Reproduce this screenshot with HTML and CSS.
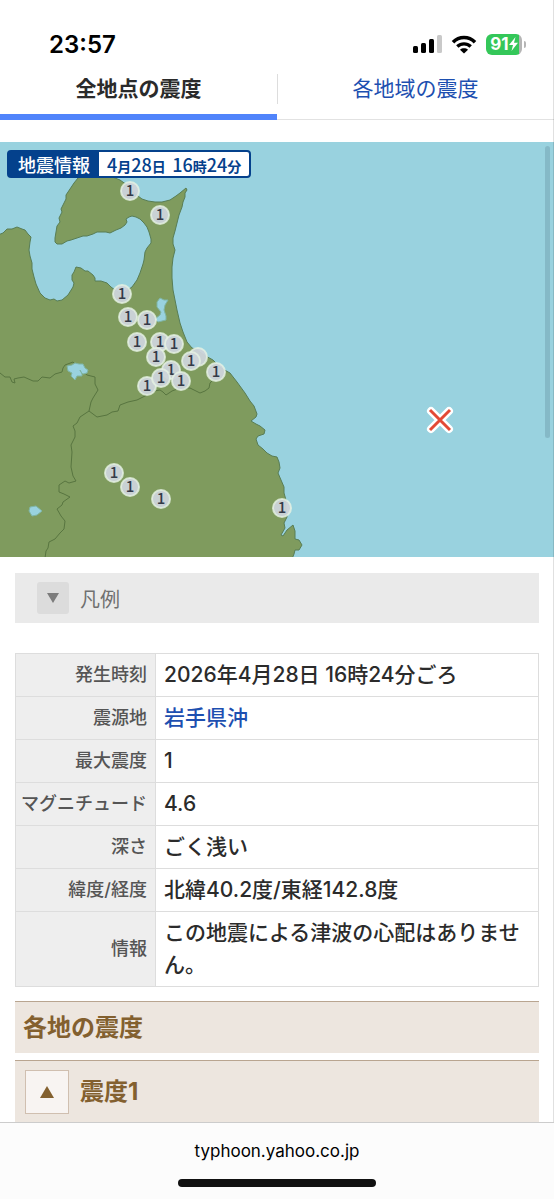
FILE: index.html
```html
<!DOCTYPE html>
<html lang="ja">
<head>
    <meta charset="UTF-8">
    <meta name="viewport" content="width=device-width, initial-scale=1.0">
    <title>地震情報</title>
    <link rel="stylesheet" href="styles.css">
</head>
<body>

<header class="status-bar">
    <time class="clock">23:57</time>
    <div class="status-icons">
        <svg width="29" height="18" viewBox="0 0 29 18" aria-hidden="true">
            <rect x="0" y="11" width="5" height="7" rx="1.5"/>
            <rect x="8" y="8" width="5" height="10" rx="1.5"/>
            <rect x="16" y="4" width="5" height="14" rx="1.5"/>
            <rect x="24" y="0" width="5" height="18" rx="1.5" fill="#c9c9c9"/>
        </svg>
        <svg width="26" height="19" viewBox="0 0 26 19" aria-hidden="true">
            <path d="M2 7.2C8.2 1 17.800 1 24 7.200" fill="none" stroke="#000" stroke-width="3.600"/>
            <path d="M6.300 11.600C10.200 7.900 15.800 7.900 19.700 11.600" fill="none" stroke="#000" stroke-width="3.400"/>
            <path d="M13 18.600L9 14.700C11.200 12.800 14.800 12.800 17 14.700Z"/>
        </svg>
        <div class="battery">
            <span>91</span>
            <svg width="9" height="14" viewBox="0 0 9 14" aria-hidden="true"><path d="M6.500 0L0 8H4L2.500 14L9 5.800H5Z" fill="#fff"/></svg>
        </div>
    </div>
</header>

<main>
    <nav class="tabs">
        <a class="tab active" href="#points">全地点の震度</a>
        <a class="tab" href="#areas">各地域の震度</a>
    </nav>

    <div class="map" id="points">
        <svg class="map-image" viewBox="0 0 554 415" role="img" aria-label="震度分布地図">
            <path class="land" d="M-2 93L3 91L7 87L12 87L17 85L22 87L25 88L28 92L31 95L30 100L29 108L30 114L32 121L32 127L34 135L36 142L40 151L45 156L50 158L54 157L57 159L62 158L68 153L73 145L74 141L72 138L72 133L74 130L76 125L81 126L85 129L88 129L93 133L95 136L95 139L101 139L107 141L111 145L115 148L122 152L132 145L137 138L140 131L143 122L144 118L145 110L147 106L151 101L151 97L149 90L147 85L144 81L140 77L136 75L132 74L129 75L126 77L127 80L125 83L121 86L116 88L110 91L106 90L101 90L97 90L93 92L90 93L87 94L83 94L77 96L71 98L67 99L62 102L57 102L55 100L55 96L56 90L57 84L60 80L59 76L62 70L61 67L63 63L66 57L66 53L68 50L72 44L74 41L78 36L84 32L105 32L120 38L127 43L134 51L142 57L148 59L155 60L162 60L170 58L176 54L180 51L186 46L187 48L185 51L185 55L183 60L182 65L179 73L177 81L175 89L173 96L173 102L175 108L173 116L172 125L172 136L173 148L175 158L177 168L180 181L183 190L187 200L192 206L197 208L204 213L213 218L221 226L230 231L237 240L245 251L250 259L254 264L257 272L256 275L251 279L256 282L260 284L265 288L264 292L258 294L256 297L258 303L263 307L267 311L272 314L277 315L279 320L280 326L278 331L281 338L284 345L284 351L286 358L286 366L287 375L284 381L285 386L281 393L283 394L287 388L293 383L295 389L295 397L299 398L302 403L299 408L295 408L294 412L292 417H-2Z"/>

            <path class="border" d="M0 231L5 235L10 235L12 240L15 241L14 237L18 236L24 235L33 239L38 239L42 235L50 236L55 232L62 230L63 226L65 223L73 220L78 225L87 233L95 235L95 242L98 248L93 256L91 260L89 269L97 275L107 273L112 270L118 269L120 263L128 260L137 258L147 253L154 249L160 248L163 250L166 253L172 249L180 246L190 246L196 249L200 251L205 249L209 246L210 241L214 237"/>
            <path class="border" d="M89 269L80 275L77 281L73 284L75 289L75 295L71 303L72 310L71 325L73 334L76 339L69 341L65 339L59 343L59 350L64 352L70 355L63 360L62 363L57 367L61 374L65 379L64 387L60 391L55 397L49 400L48 406L46 409L45 416"/>

            <path class="lake" d="M160 156L164 158L168 158L165 163L164 168L166 174L166 178L158 180L155 177L160 173L161 170L157 165L157 160Z"/>
            <path class="lake" d="M67 224L72 223L75 221L79 222L83 222L85 226L88 228L87 231L83 232L81 230L80 228L82 232L82 234L77 234L75 238L71 234L72 231L68 229Z"/>
            <path class="lake" d="M30 365L36 364L42 369L37 373L32 374L29 369Z"/>

            <g class="pin"><circle cx="130" cy="49" r="9"/><text x="130" y="54">1</text></g>
            <g class="pin"><circle cx="160" cy="73" r="9"/><text x="160" y="78">1</text></g>
            <g class="pin"><circle cx="122" cy="152" r="9"/><text x="122" y="157">1</text></g>
            <g class="pin"><circle cx="128" cy="175" r="9"/><text x="128" y="180">1</text></g>
            <g class="pin"><circle cx="147" cy="178" r="9"/><text x="147" y="183">1</text></g>
            <g class="pin"><circle cx="137" cy="200" r="9"/><text x="137" y="205">1</text></g>
            <g class="pin"><circle cx="160" cy="200" r="9"/><text x="160" y="205">1</text></g>
            <g class="pin"><circle cx="174" cy="202" r="9"/><text x="174" y="207">1</text></g>
            <g class="pin"><circle cx="156" cy="215" r="9"/><text x="156" y="220">1</text></g>
            <g class="pin"><circle cx="198" cy="215" r="9"/></g>
            <g class="pin"><circle cx="191" cy="219" r="9"/><text x="191" y="224">1</text></g>
            <g class="pin"><circle cx="216" cy="230" r="9"/><text x="216" y="235">1</text></g>
            <g class="pin"><circle cx="171" cy="228" r="9"/><text x="171" y="233">1</text></g>
            <g class="pin"><circle cx="181" cy="239" r="9"/><text x="181" y="244">1</text></g>
            <g class="pin"><circle cx="147" cy="244" r="9"/><text x="147" y="249">1</text></g>
            <g class="pin"><circle cx="161" cy="236" r="9"/><text x="161" y="241">1</text></g>
            <g class="pin"><circle cx="114" cy="331" r="9"/><text x="114" y="336">1</text></g>
            <g class="pin"><circle cx="130" cy="345" r="9"/><text x="130" y="350">1</text></g>
            <g class="pin"><circle cx="161" cy="357" r="9"/><text x="161" y="362">1</text></g>
            <g class="pin"><circle cx="282" cy="366" r="9"/><text x="282" y="371">1</text></g>

            <!-- epicenter -->
            <path class="epicenter-edge" d="M431 269L449 287M449 269L431 287"/>
            <path class="epicenter" d="M430 268L450 288M450 268L430 288"/>
        </svg>
        <div class="map-title">
            <strong>地震情報</strong>
            <span class="map-date"><b>4</b>月<b>28</b>日&nbsp; <b>16</b>時<b>24</b>分</span>
        </div>
        <div class="scroll-thumb"></div>
    </div>

    <div class="content">
        <button class="legend" type="button"><span class="legend-icon">
            <svg width="12" height="10" viewBox="0 0 12 10" aria-hidden="true"><path d="M0 0H12L6 10Z" fill="#7c7c7c"/></svg>
        </span>凡例</button>

        <table class="quake-info">
            <tr><th scope="row">発生時刻</th><td>2026年4月28日 16時24分ごろ</td></tr>
            <tr><th scope="row">震源地</th><td><a href="#epicenter">岩手県沖</a></td></tr>
            <tr><th scope="row">最大震度</th><td>1</td></tr>
            <tr><th scope="row">マグニチュード</th><td>4.6</td></tr>
            <tr><th scope="row">深さ</th><td>ごく浅い</td></tr>
            <tr><th scope="row">緯度/経度</th><td>北緯40.2度/東経142.8度</td></tr>
            <tr><th scope="row">情報</th><td>この地震による津波の心配はありません。</td></tr>
        </table>

        <h2 class="heading" id="areas">各地の震度</h2>
        <h3 class="heading level">
            <button class="toggle" type="button" aria-label="震度1を閉じる">
                <svg width="14" height="12" viewBox="0 0 14 12" aria-hidden="true"><path d="M7 0L14 12H0Z" fill="#83602f"/></svg>
            </button>
            震度1
        </h3>
    </div>
</main>

<footer class="browser-bar">
    <div class="address">typhoon.yahoo.co.jp</div>
    <div class="home-indicator"></div>
</footer>

</body>
</html>
```

FILE: styles.css
```css
* {
    box-sizing: border-box;
}
body {
    font-family: Inter, "Noto Sans CJK JP", sans-serif;
    color: #2b2b2b;
    background-color: #fff;
    margin: 0;
    display: flex;
    flex-direction: column;
    height: 100vh;
    overflow: hidden;
}
a {
    color: #1d4fb0;
    text-decoration: none;
}
button {
    font: inherit;
    color: inherit;
    border: none;
    padding: 0;
    cursor: pointer;
}

/* status bar */
.status-bar {
    display: flex;
    justify-content: space-between;
    align-items: center;
    height: 66px;
    padding: 22px 31px 0 49px;
    flex-shrink: 0;
    border-right: 1px solid #e0e0e0;
}
.clock {
    font-size: 24px;
    font-weight: 600;
    color: #000;
}
.status-icons {
    display: flex;
    align-items: center;
    gap: 9px;
}
.battery {
    position: relative;
    display: flex;
    align-items: center;
    justify-content: center;
    width: 36px;
    height: 21px;
    border-radius: 6px;
    background: linear-gradient(to right, #34c759 91%, #b5b5b5 91%);
    color: #fff;
    font-size: 17px;
    font-weight: 700;
}
.battery::after {
    content: "";
    position: absolute;
    right: -4px;
    width: 2px;
    height: 7px;
    border-radius: 0 2px 2px 0;
    background-color: #b5b5b5;
}

main {
    position: relative;
    flex: 1;
    min-height: 0;
    overflow: hidden;
}
main::after {
    content: "";
    position: absolute;
    top: 0;
    right: 0;
    bottom: 0;
    width: 1px;
    background-color: rgba(0, 0, 0, 0.12);
}

/* tabs */
.tabs {
    display: flex;
    height: 54px;
    margin-bottom: 22px;
}
.tab {
    position: relative;
    flex: 1;
    padding-top: 7px;
    font-size: 21px;
    line-height: 32px;
    text-align: center;
    border-bottom: 1px solid #e2e2e2;
}
.tab.active {
    color: #2b2b2b;
    font-weight: 700;
    border-bottom: 6px solid #5084fb;
}
.tab + .tab::before {
    content: "";
    position: absolute;
    left: 0;
    top: 8px;
    width: 1px;
    height: 30px;
    background-color: #ddd;
}

/* map */
.map {
    position: relative;
    background-color: #99d2df;
}
.map-image {
    display: block;
    width: 100%;
    height: auto;
}
.land {
    fill: #7f9b5e;
    stroke: #587d55;
    stroke-width: 1;
    stroke-linejoin: round;
}
.border {
    fill: none;
    stroke: #587540;
    stroke-width: 1;
    stroke-linejoin: round;
}
.lake {
    fill: #99d2df;
    stroke: #7fb5a5;
    stroke-width: 1;
}
.pin circle {
    fill: #cdd4da;
    fill-opacity: 0.95;
    stroke: #e6f2e4;
    stroke-opacity: 0.8;
    stroke-width: 2;
}
.pin text {
    font-family: "Noto Sans CJK JP", sans-serif;
    font-size: 15px;
    font-weight: 500;
    text-anchor: middle;
    fill: #343a48;
}
.epicenter-edge,
.epicenter {
    fill: none;
    stroke: #fff;
    stroke-width: 8;
    stroke-linecap: round;
}
.epicenter {
    stroke: #e34935;
    stroke-width: 3;
    stroke-linecap: butt;
}
.map-title {
    position: absolute;
    top: 8px;
    left: 7px;
    display: flex;
    height: 28px;
    line-height: 24px;
    border: 2px solid #04418c;
    border-radius: 4px;
    background-color: #04418c;
    color: #04418c;
    font-family: "Noto Sans CJK JP", sans-serif;
}
.map-title strong {
    padding: 0 9px;
    color: #fff;
    font-size: 18px;
    font-weight: 500;
}
.map-date {
    padding: 0 8px;
    border-radius: 0 2px 2px 0;
    background-color: #fff;
    font-size: 14px;
    font-weight: 700;
    white-space: nowrap;
}
.map-date b {
    font-size: 18px;
    font-weight: 500;
}
.scroll-thumb {
    position: absolute;
    top: 4px;
    right: 4px;
    width: 5px;
    height: 292px;
    border-radius: 3px;
    background-color: rgba(90, 130, 145, 0.3);
}

.content {
    padding: 16px 15px 0;
}
.legend {
    display: flex;
    align-items: center;
    gap: 11px;
    width: 100%;
    height: 50px;
    padding-left: 22px;
    margin-bottom: 30px;
    background-color: #eaeaea;
    color: #707070;
    font-size: 20px;
}
.legend-icon {
    display: flex;
    align-items: center;
    justify-content: center;
    width: 32px;
    height: 32px;
    border-radius: 3px;
    background-color: #dcdcdc;
}

/* earthquake details */
.quake-info {
    width: 100%;
    border-collapse: collapse;
    margin-bottom: 14px;
}
.quake-info th,
.quake-info td {
    border: 1px solid #ddd;
    padding: 5px 8px;
    line-height: 32px;
}
.quake-info th {
    width: 140px;
    padding-left: 4px;
    background-color: #eee;
    color: #555;
    font-size: 18px;
    font-weight: 500;
    text-align: right;
    white-space: nowrap;
}
.quake-info td {
    font-size: 21px;
    font-weight: 500;
    word-break: break-all;
}

.heading {
    height: 52px;
    margin: 0 0 7px;
    padding: 0 8px;
    border-top: 1px solid #b9a590;
    background-color: #ede6df;
    color: #83602f;
    font-size: 24px;
    font-weight: 700;
    line-height: 52px;
}
.level {
    display: flex;
    align-items: center;
    gap: 11px;
    height: 62px;
    padding-left: 10px;
}
.toggle {
    display: flex;
    align-items: center;
    justify-content: center;
    width: 44px;
    height: 44px;
    border: 1px solid #d0bfb0;
    background-color: #f8f4f2;
}

/* browser bar */
.browser-bar {
    flex-shrink: 0;
    height: 77px;
    padding-top: 16px;
    border-top: 1px solid #ccc;
    background-color: #fcfcfc;
    color: #000;
    text-align: center;
}
.address {
    font-size: 17px;
    line-height: 24px;
}
.home-indicator {
    width: 198px;
    height: 8px;
    margin: 16px auto 0;
    border-radius: 4px;
    background-color: #111;
}
```
